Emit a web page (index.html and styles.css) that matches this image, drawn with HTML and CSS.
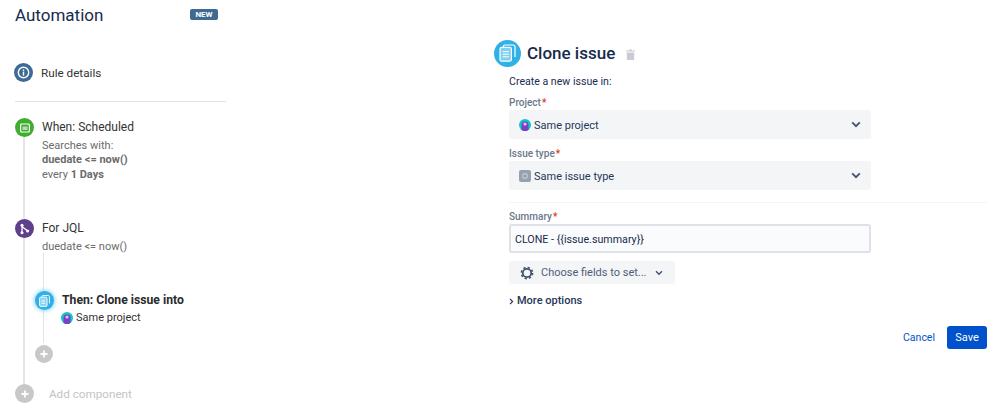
FILE: index.html
```html
<!DOCTYPE html>
<html lang="en">
<head>
  <meta charset="UTF-8">
  <meta name="viewport" content="width=device-width, initial-scale=1.0">
  <title>Automation</title>
  <link rel="stylesheet" href="styles.css">
</head>
<body>
  <div class="page">
    <aside class="sidebar">
      <div class="side-head">
        <h1>Automation</h1>
        <span class="badge">NEW</span>
      </div>
      <div class="rule-details">
        <span class="dot dot-blue">
          <svg width="13" height="13" viewBox="0 0 13 13"><circle cx="6.5" cy="6.5" r="5.2" fill="none" stroke="#fff" stroke-width="1.4"/><rect x="5.8" y="3.4" width="1.4" height="1.4" fill="#fff"/><rect x="5.8" y="5.6" width="1.4" height="4" fill="#fff"/></svg>
        </span>
        <span>Rule details</span>
      </div>
      <hr class="side-rule">
      <div class="timeline">
        <div class="step step-when">
          <span class="dot dot-green">
            <svg width="10" height="10" viewBox="0 0 10 10"><rect x="0.6" y="1" width="8.8" height="8" rx="1" fill="none" stroke="#fff" stroke-width="1.2"/><rect x="2.5" y="3.5" width="5" height="3.5" fill="#fff" opacity="0.6"/></svg>
          </span>
          <div class="step-body">
            <div class="step-title">When: Scheduled</div>
            <div class="step-text">Searches with:</div>
            <div class="step-text"><b>duedate &lt;= now()</b></div>
            <div class="step-text">every <b>1 Days</b></div>
          </div>
        </div>
        <div class="step step-for">
          <span class="dot dot-purple">
            <svg width="11" height="12" viewBox="0 0 11 12"><circle cx="3" cy="2.2" r="1.5" fill="#fff"/><circle cx="3" cy="9.8" r="1.5" fill="#fff"/><circle cx="8.6" cy="8" r="1.5" fill="#fff"/><path d="M3 2.2V9.8M3 3.4L8.6 8" fill="none" stroke="#fff" stroke-width="1.3"/></svg>
          </span>
          <div class="step-body">
            <div class="step-title">For JQL</div>
            <div class="step-text">duedate &lt;= now()</div>
          </div>
        </div>
        <div class="branch">
          <div class="step step-then">
            <span class="dot dot-sky">
              <svg width="11" height="12" viewBox="0 0 11 12"><rect x="0.6" y="2.2" width="7.4" height="9.2" rx="1.2" fill="#7fd0f2" stroke="#fff" stroke-width="1"/><path d="M3 1.8V1.2A0.7 0.7 0 0 1 3.7 0.6H9.4A1 1 0 0 1 10.4 1.6V8.4" fill="none" stroke="#fff" stroke-width="1"/><path d="M2.4 5H6.2M2.4 6.8H6.2M2.4 8.6H6.2" stroke="#fff" stroke-width="0.8"/></svg>
            </span>
            <div class="step-body">
              <div class="then-title">Then: Clone issue into</div>
              <div class="then-project">
                <svg class="avatar" width="12" height="12" viewBox="0 0 12 12"><circle cx="6" cy="6" r="6" fill="#12c2c9"/><path d="M2.6 11A5.6 5.6 0 0 0 9.4 11L9.4 6A3.4 3.4 0 0 0 2.6 6Z" fill="#7b3fc4"/><circle cx="6" cy="5" r="1.6" fill="#d9c8f2"/></svg>
                <span>Same project</span>
              </div>
            </div>
          </div>
          <span class="dot dot-add dot-add-inner">
            <svg width="8" height="8" viewBox="0 0 8 8"><path d="M4 0.5V7.5M0.5 4H7.5" stroke="#fff" stroke-width="1.8"/></svg>
          </span>
        </div>
        <div class="add-component">
          <span class="dot dot-add">
            <svg width="8" height="8" viewBox="0 0 8 8"><path d="M4 0.5V7.5M0.5 4H7.5" stroke="#fff" stroke-width="1.8"/></svg>
          </span>
          <span>Add component</span>
        </div>
      </div>
    </aside>

    <main class="editor">
      <div class="editor-head">
        <span class="head-icon">
          <svg width="17" height="18" viewBox="0 0 17 18"><rect x="1" y="3.4" width="11.4" height="13.8" rx="1.8" fill="#7fd0f2" stroke="#fff" stroke-width="1.2"/><path d="M4.4 3V2.4A1.4 1.4 0 0 1 5.8 1H14A2 2 0 0 1 16 3V13" fill="none" stroke="#fff" stroke-width="1.2"/><path d="M3.6 7.6H9.8M3.6 10.2H9.8M3.6 12.8H9.8" stroke="#fff" stroke-width="1"/></svg>
        </span>
        <h2>Clone issue</h2>
        <svg class="trash" width="9" height="11" viewBox="0 0 9 11"><path d="M0 1.4H3V0.4H6V1.4H9V2.6H0ZM0.8 3.4H8.2V10A1 1 0 0 1 7.2 11H1.8A1 1 0 0 1 0.8 10Z" fill="#c9ccd2"/></svg>
      </div>
      <p class="intro">Create a new issue in:</p>

      <label class="field-label">Project<i>*</i></label>
      <div class="select">
        <svg class="avatar" width="12" height="12" viewBox="0 0 12 12"><circle cx="6" cy="6" r="6" fill="#12c2c9"/><path d="M2.6 11A5.6 5.6 0 0 0 9.4 11L9.4 6A3.4 3.4 0 0 0 2.6 6Z" fill="#7b3fc4"/><circle cx="6" cy="5" r="1.6" fill="#d9c8f2"/></svg>
        <span>Same project</span>
        <svg class="chevron" width="10" height="7" viewBox="0 0 10 7"><path d="M1.2 1.4L5 5.2L8.8 1.4" fill="none" stroke="#42526e" stroke-width="1.8"/></svg>
      </div>

      <label class="field-label label-type">Issue type<i>*</i></label>
      <div class="select">
        <svg class="avatar" width="12" height="12" viewBox="0 0 12 12"><rect width="12" height="12" rx="2" fill="#97a0af"/><circle cx="6" cy="6" r="2.4" fill="none" stroke="#c1c7d0" stroke-width="1.2"/></svg>
        <span>Same issue type</span>
        <svg class="chevron" width="10" height="7" viewBox="0 0 10 7"><path d="M1.2 1.4L5 5.2L8.8 1.4" fill="none" stroke="#42526e" stroke-width="1.8"/></svg>
      </div>

      <hr class="main-rule">

      <label class="field-label">Summary<i>*</i></label>
      <div class="text-input">CLONE - {{issue.summary}}</div>

      <div class="fields-btn">
        <svg width="14" height="14" viewBox="0 0 14 14"><circle cx="7" cy="7" r="4.2" fill="none" stroke="#42526e" stroke-width="1.8"/><circle cx="7" cy="7" r="5.6" fill="none" stroke="#42526e" stroke-width="1.6" stroke-dasharray="2.2 2.2"/></svg>
        <span>Choose fields to set...</span>
        <svg width="8" height="6" viewBox="0 0 8 6"><path d="M1 1.2L4 4.2L7 1.2" fill="none" stroke="#42526e" stroke-width="1.4"/></svg>
      </div>

      <div class="more">
        <svg width="5" height="7" viewBox="0 0 5 7"><path d="M1 0.8L3.6 3.5L1 6.2" fill="none" stroke="#253858" stroke-width="1.2"/></svg>
        <span>More options</span>
      </div>

      <div class="actions">
        <a class="cancel">Cancel</a>
        <button class="save">Save</button>
      </div>
    </main>
  </div>
</body>
</html>
```

FILE: styles.css
```css
* {
  box-sizing: border-box;
}

body {
  margin: 0;
  background: #fff;
  font-family: Roboto, "Liberation Sans", sans-serif;
  color: #172b4d;
}

.page {
  display: flex;
  height: 415px;
  overflow: hidden;
}

/* left column */
.sidebar {
  width: 211px;
  margin-left: 15px;
  padding-top: 4px;
  flex-shrink: 0;
}

.side-head {
  display: flex;
  align-items: center;
  justify-content: space-between;
  height: 22px;
  padding-right: 8px;
}

.side-head h1 {
  margin: 0;
  font-size: 17px;
  font-weight: 400;
  color: #172b4d;
}

.badge {
  width: 28px;
  height: 11px;
  margin-top: -2px;
  border-radius: 2px;
  background: #3f6a92;
  color: #fff;
  font-size: 8px;
  font-weight: 700;
  line-height: 11px;
  text-align: center;
}

.dot {
  display: flex;
  align-items: center;
  justify-content: center;
  width: 19px;
  height: 19px;
  border-radius: 50%;
  flex-shrink: 0;
}

.dot-blue { background: #3d6b96; }
.dot-green { background: #3fae2f; }
.dot-purple { background: #5e3f8c; }
.dot-sky { background: #2fb1e8; box-shadow: 0 0 4px 1px #8fd6f5; }
.dot-add { background: #c8c8c8; }

.rule-details {
  display: flex;
  align-items: center;
  gap: 8px;
  margin: 37px 0 0 -1px;
  font-size: 11.7px;
  color: #333;
}

.side-rule {
  height: 1px;
  margin: 19px 0 0;
  border: 0;
  background: #e3e3e3;
}

.timeline {
  position: relative;
  margin-top: 16px;
}

/* long rail behind the dots */
.timeline::before {
  content: "";
  position: absolute;
  left: 8px;
  top: 10px;
  height: 260px;
  width: 2px;
  background: #e6e6e6;
}

.step {
  position: relative;
  display: flex;
  gap: 8px;
}

.step-body {
  padding-top: 2px;
}

.step-title {
  font-size: 12px;
  line-height: 15px;
  color: #333;
}

.step-text {
  font-size: 11px;
  line-height: 14.5px;
  color: #6b6b6b;
}

.step-title + .step-text {
  margin-top: 3.5px;
}

.step-when {
  height: 101px;
}

.step-for {
  height: 34px;
}

.branch {
  position: relative;
  margin-left: 20px;
  padding-top: 38px;
  height: 132px;
}

.branch::before {
  content: "";
  position: absolute;
  left: 8px;
  top: 0;
  height: 90px;
  width: 1px;
  background: #e3e3e3;
}

.step-then {
  height: 46px;
}

.then-title {
  font-size: 12.2px;
  font-weight: 700;
  line-height: 15px;
  color: #2b2b2b;
}

.then-project {
  display: flex;
  align-items: center;
  gap: 3px;
  margin: 2px 0 0 -1px;
  font-size: 11px;
  line-height: 15px;
  color: #333;
}

.dot-add-inner {
  position: relative;
  width: 18px;
  height: 18px;
  margin-top: 8px;
}

.add-component {
  position: relative;
  display: flex;
  align-items: center;
  gap: 15px;
  margin-top: -1px;
  font-size: 11.7px;
  color: #c4c4c4;
}

/* right column */
.editor {
  width: 478px;
  margin-left: 283px;
  flex-shrink: 0;
}

.editor-head {
  display: flex;
  align-items: center;
  height: 26px;
  margin: 40px 0 0 -15px;
}

.head-icon {
  display: flex;
  align-items: center;
  justify-content: center;
  width: 27px;
  height: 27px;
  border-radius: 50%;
  background: #2fb1e8;
}

.editor-head h2 {
  margin: 0 0 0 6px;
  font-size: 17px;
  font-weight: 500;
  color: #172b4d;
}

.trash {
  margin: 2px 0 0 11px;
}

.intro {
  margin: 8px 0 0;
  font-size: 10.6px;
  line-height: 15px;
  color: #172b4d;
}

.field-label {
  display: block;
  margin-top: 7px;
  font-size: 10px;
  font-weight: 500;
  line-height: 14px;
  color: #6b778c;
}

.field-label i {
  margin-left: 1px;
  font-style: normal;
  color: #de350b;
}

.label-type {
  margin-top: 8px;
}

.select {
  display: flex;
  align-items: center;
  width: 362px;
  height: 29px;
  padding: 0 10px;
  border-radius: 3px;
  background: #f4f5f7;
  font-size: 11px;
  color: #253858;
}

.select span {
  padding-top: 2px;
}

.select .avatar {
  margin-right: 3px;
}

.chevron {
  margin-left: auto;
}

.main-rule {
  height: 1px;
  margin: 12px 0 0;
  border: 0;
  background: #f4f5f7;
}

.text-input {
  width: 362px;
  height: 29px;
  padding-left: 4px;
  border: 2px solid #dfe1e6;
  border-radius: 3px;
  background: #fafbfc;
  font-size: 10.7px;
  line-height: 27px;
  color: #172b4d;
}

.fields-btn {
  display: flex;
  align-items: center;
  width: 166px;
  height: 23px;
  margin-top: 8px;
  padding-left: 11px;
  border-radius: 3px;
  background: #f4f5f7;
  font-size: 11px;
  color: #505f79;
}

.fields-btn span {
  margin: 0 8px 0 7px;
}

.more {
  display: flex;
  align-items: center;
  gap: 3px;
  margin-top: 10px;
  font-size: 11px;
  font-weight: 500;
  line-height: 14px;
  color: #253858;
}

.actions {
  display: flex;
  align-items: center;
  justify-content: flex-end;
  gap: 12px;
  margin-top: 18px;
}

.cancel {
  font-size: 10.5px;
  color: #0052cc;
}

.save {
  width: 40px;
  height: 23px;
  padding: 0;
  border: 0;
  border-radius: 3px;
  background: #0052cc;
  color: #fff;
  font-family: inherit;
  font-size: 11px;
}
```
